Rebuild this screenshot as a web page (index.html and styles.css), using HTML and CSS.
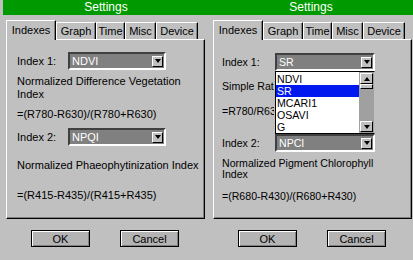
FILE: index.html
```html
<!DOCTYPE html>
<html lang="en">
<head>
    <meta charset="UTF-8">
    <title>Settings</title>
    <link rel="stylesheet" href="styles.css">
</head>
<body>
    <div class="screens">
        <!-- Pantalla izquierda -->
        <div class="screen screen-left">
            <div class="titlebar">Settings</div>
            <div class="tabs">
                <div class="tab active">Indexes</div>
                <div class="tab">Graph</div>
                <div class="tab">Time</div>
                <div class="tab">Misc</div>
                <div class="tab">Device</div>
            </div>
            <div class="panel">
                <div class="row row1">
                    <span class="label">Index 1:</span>
                    <div class="select"><span class="value">NDVI</span><span class="arrow"></span></div>
                </div>
                <p class="desc d1">Normalized Difference Vegetation<br>Index</p>
                <p class="formula f1">=(R780-R630)/(R780+R630)</p>
                <div class="row row2">
                    <span class="label">Index 2:</span>
                    <div class="select"><span class="value">NPQI</span><span class="arrow"></span></div>
                </div>
                <p class="desc d2">Normalized Phaeophytinization Index</p>
                <p class="formula f2">=(R415-R435)/(R415+R435)</p>
            </div>
            <div class="buttons">
                <button class="btn">OK</button>
                <button class="btn">Cancel</button>
            </div>
        </div>

        <!-- Pantalla derecha -->
        <div class="screen screen-right">
            <div class="titlebar">Settings</div>
            <div class="tabs">
                <div class="tab active">Indexes</div>
                <div class="tab">Graph</div>
                <div class="tab">Time</div>
                <div class="tab">Misc</div>
                <div class="tab">Device</div>
            </div>
            <div class="panel">
                <div class="row row1">
                    <span class="label">Index 1:</span>
                    <div class="select"><span class="value">SR</span><span class="arrow"></span></div>
                </div>
                <!-- texto tapado por la lista abierta -->
                <p class="desc d1 covered">Simple Ratio</p>
                <p class="formula f1 covered">=R780/R630</p>
                <div class="row row2">
                    <span class="label">Index 2:</span>
                    <div class="select"><span class="value">NPCI</span><span class="arrow"></span></div>
                </div>
                <p class="desc d2">Normalized Pigment Chlorophyll<br>Index</p>
                <p class="formula f2">=(R680-R430)/(R680+R430)</p>

                <!-- Lista desplegable abierta -->
                <div class="dropdown">
                    <ul class="options">
                        <li>NDVI</li>
                        <li class="selected">SR</li>
                        <li>MCARI1</li>
                        <li>OSAVI</li>
                        <li>G</li>
                    </ul>
                    <div class="scrollbar">
                        <span class="sb-btn up"></span>
                        <span class="thumb"></span>
                        <span class="track"></span>
                        <span class="sb-btn down"></span>
                    </div>
                </div>
            </div>
            <div class="buttons">
                <button class="btn">OK</button>
                <button class="btn">Cancel</button>
            </div>
        </div>
    </div>
</body>
</html>
```

FILE: styles.css
```css
body {
    margin: 0;
    background-color: #c0c0c0;
    font-family: "Liberation Sans", Arial, sans-serif;
    color: #000;
}

.screens {
    display: flex;
    width: 413px;
    height: 260px;
    overflow: hidden;
}

.screen {
    display: flex;
    flex-direction: column;
}

.screen-left {
    width: 206px;
    padding-left: 3px;
    font-size: 11px;
}

.screen-right {
    width: 204px;
    font-size: 10.6px;
}

/* Barra de titulo */
.titlebar {
    height: 15px;
    line-height: 15px;
    background-color: #009a00;
    color: #fff;
    text-align: center;
    font-size: 12px;
}

/* Pestanas */
.tabs {
    display: flex;
    align-items: flex-end;
    height: 19px;
    margin-top: 5px;
    margin-left: 3px;
    position: relative;
    z-index: 2;
}

.screen-right .tabs {
    margin-left: 4px;
}

.tab {
    box-sizing: border-box;
    height: 17px;
    line-height: 16px;
    text-align: center;
    white-space: nowrap;
    border-top: 1px solid #fff;
    border-left: 1px solid #fff;
    border-right: 1px solid #000;
    box-shadow: inset -1px 0 0 #808080;
    background-color: #c0c0c0;
    font-size: 11px;
}

.tab.active {
    height: 20px;
    line-height: 19px;
    margin-bottom: -1px;
}

.tab:nth-child(1) { width: 50px; }
.tab:nth-child(2) { width: 40px; }
.tab:nth-child(3) { width: 29px; }
.tab:nth-child(4) { width: 31px; }
.tab:nth-child(5) { width: 42px; }

/* Panel */
.panel {
    position: relative;
    height: 178px;
    margin-left: 3px;
    border-top: 1px solid #fff;
    border-left: 1px solid #fff;
    border-right: 1px solid #000;
    border-bottom: 1px solid #000;
    box-shadow: inset -1px -1px 0 #808080;
    padding-left: 10px;
}

.screen-left .panel { width: 187px; }

.screen-right .panel {
    width: 189px;
    margin-left: 4px;
    padding-left: 8px;
}

.row {
    display: flex;
    align-items: center;
    height: 18px;
}

.label {
    width: 51px;
}

.screen-right .label {
    width: 53px;
}

.select {
    display: flex;
    align-items: center;
    width: 94px;
    height: 14px;
    border: 2px solid;
    border-color: #404040 #fff #fff #404040;
    background-color: #808080;
    color: #fff;
}

.screen-right .select {
    width: 96px;
}

.value {
    flex: 1;
    padding-left: 2px;
}

.arrow {
    position: relative;
    width: 11px;
    height: 11px;
    margin-right: 1px;
    background-color: #c0c0c0;
    border: 1px solid;
    border-color: #fff #000 #000 #fff;
    box-sizing: border-box;
}

.arrow::after,
.sb-btn::after {
    content: "";
    position: absolute;
    left: 50%;
    top: 50%;
    margin-left: -3px;
    margin-top: -2px;
    border-left: 3px solid transparent;
    border-right: 3px solid transparent;
    border-top: 4px solid #000;
}

.desc,
.formula {
    margin: 0;
    line-height: 13px;
}

/* parte visible del texto bajo la lista */
.covered {
    width: 52px;
    overflow: hidden;
    white-space: nowrap;
}

.screen-left .row1 { margin-top: 12px; }
.screen-left .d1 { margin-top: 5px; }
.screen-left .f1 { margin-top: 7px; }
.screen-left .row2 { margin-top: 7px; }
.screen-left .d2 { margin-top: 13px; }
.screen-left .f2 { margin-top: 17px; }

.screen-right .row1 { margin-top: 13px; }
.screen-right .d1 { margin-top: 9px; }
.screen-right .f1 { margin-top: 12px; }
.screen-right .row2 { margin-top: 16px; }
.screen-right .d2 { margin-top: 6px; line-height: 11px; }
.screen-right .f2 { margin-top: 10px; }

/* Lista desplegable */
.dropdown {
    position: absolute;
    left: 61px;
    top: 31px;
    width: 98px;
    height: 61px;
    display: flex;
    background-color: #fff;
    border: 1px solid #000;
    border-right-color: #c0c0c0;
    z-index: 5;
}

.options {
    flex: 1;
    list-style: none;
    margin: 0;
    padding: 1px 0 0 0;
    overflow: hidden;
}

.options li {
    height: 12px;
    line-height: 12px;
    padding-left: 1px;
}

.options li.selected {
    background-color: #0018f0;
    color: #fff;
}

.scrollbar {
    display: flex;
    flex-direction: column;
    width: 15px;
    background-color: #a0a0a0;
}

.sb-btn {
    position: relative;
    height: 11px;
    margin: 1px 1px 0 1px;
    background-color: #c0c0c0;
    border: 1px solid;
    border-color: #fff #000 #000 #fff;
    box-sizing: border-box;
}

.sb-btn.up::after {
    border-top: none;
    border-bottom: 4px solid #000;
}

.thumb {
    height: 5px;
    margin: 0 1px;
    background-color: #c0c0c0;
    border: 1px solid;
    border-color: #fff #000 #000 #fff;
    box-sizing: border-box;
}

.track {
    flex: 1;
}

.sb-btn.down {
    margin-bottom: 1px;
}

/* Botones */
.buttons {
    display: flex;
    gap: 30px;
    margin-top: 11px;
    padding-left: 28px;
}

.screen-right .buttons {
    padding-left: 29px;
}

.btn {
    width: 59px;
    height: 17px;
    padding: 0;
    background-color: #b4b4b4;
    border: 1px solid #000;
    box-shadow: inset 1px 1px 0 #fff, inset -1px -1px 0 #808080;
    font-family: inherit;
    font-size: 11px;
    color: #000;
}
```
